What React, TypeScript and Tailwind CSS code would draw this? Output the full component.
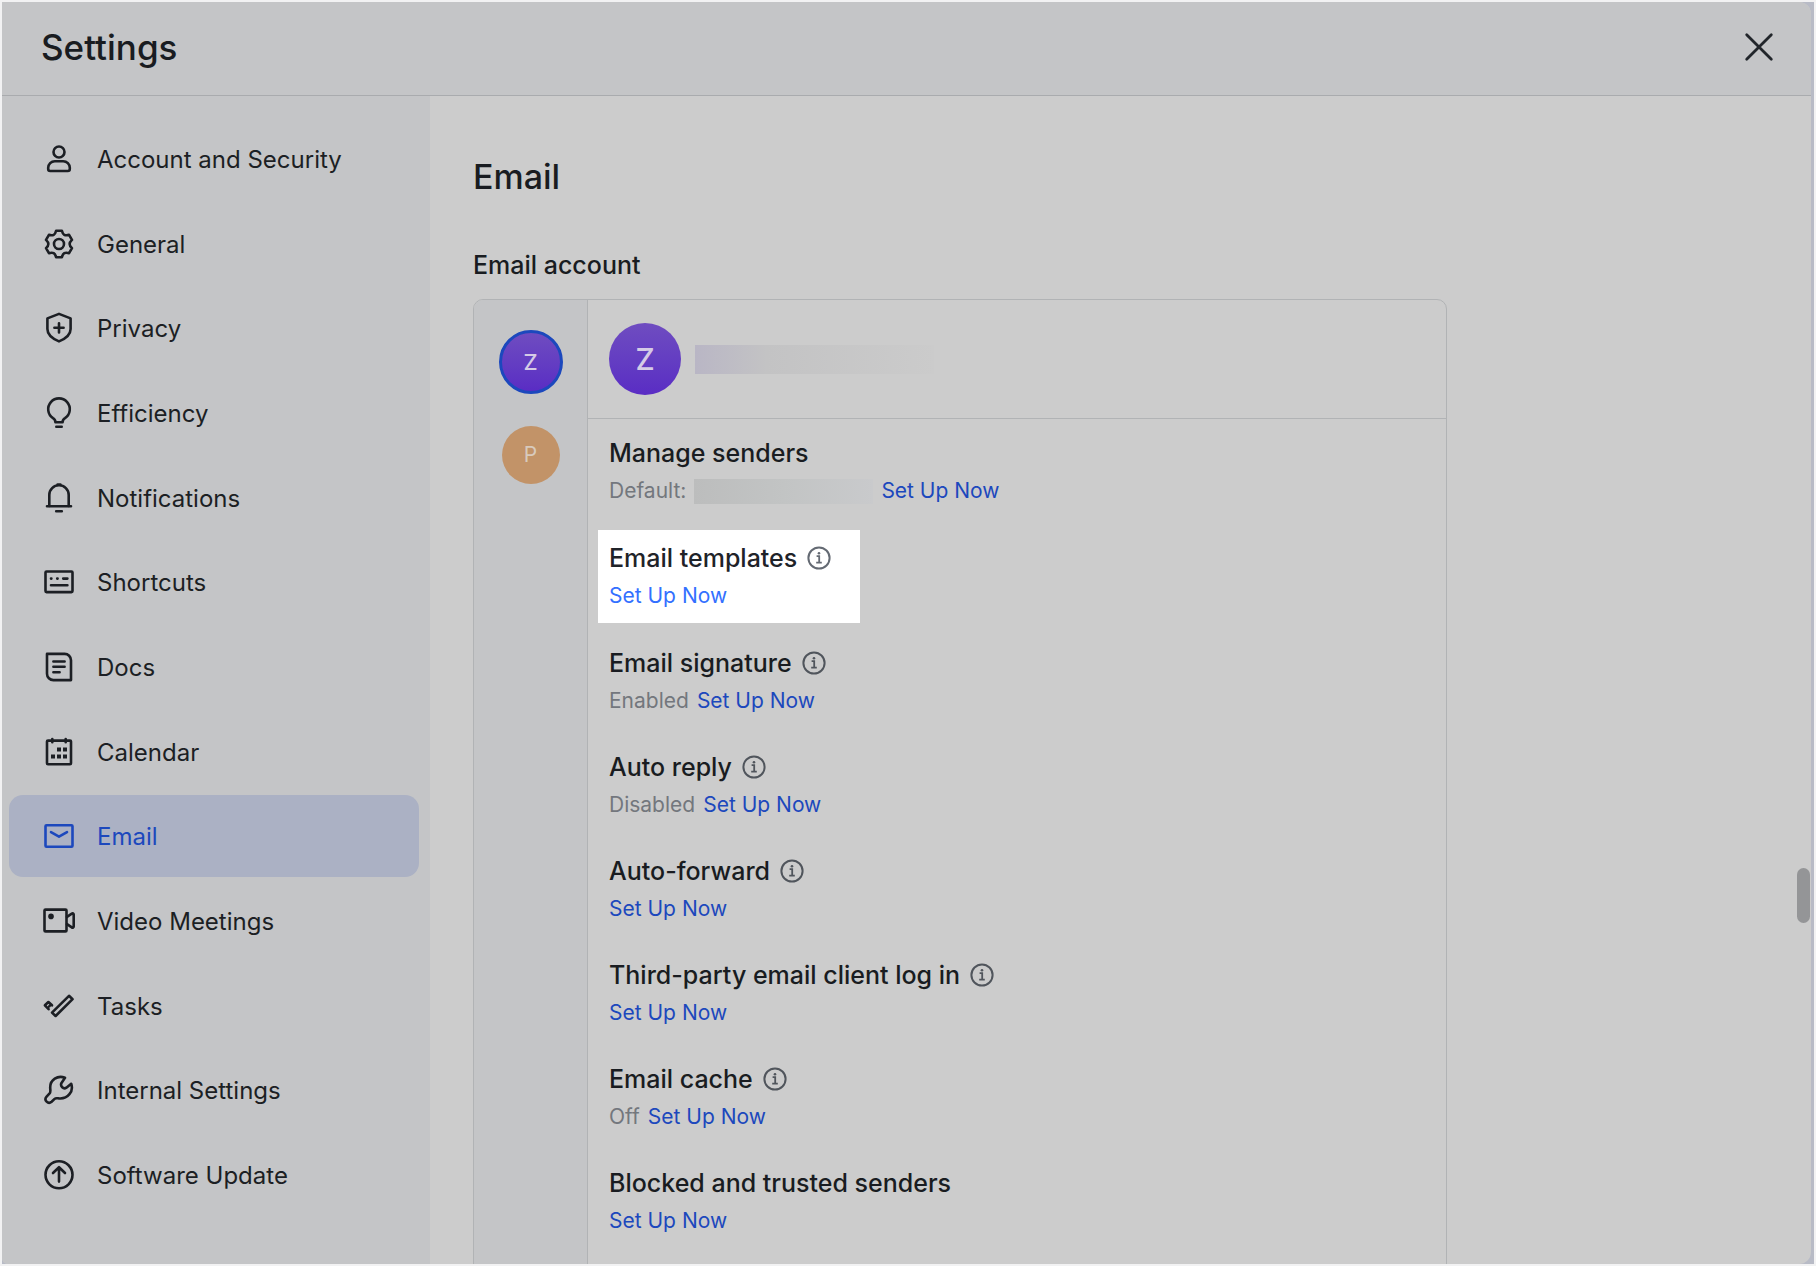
import type { ReactNode } from "react";

function Icon({ children }: { children: ReactNode }) {
  return (
    <svg
      viewBox="0 0 32 32"
      className="size-8 shrink-0"
      fill="none"
      stroke="currentColor"
      strokeWidth="2.6"
      strokeLinecap="round"
      strokeLinejoin="round"
      aria-hidden="true"
    >
      {children}
    </svg>
  );
}

/* Six-lobed gear outline: each lobe is the same pair of tips turned by 60 degrees. */
function gearPath() {
  const turn = (x: number, y: number, k: number) => {
    const a = (k * Math.PI) / 3;
    const px = 16 + x * Math.cos(a) - y * Math.sin(a);
    const py = 16 + x * Math.sin(a) + y * Math.cos(a);
    return `${px.toFixed(2)} ${py.toFixed(2)}`;
  };
  let d = "";
  for (let k = 0; k < 6; k++) {
    d += `${k === 0 ? "M" : "L"}${turn(-2.9, -13.3, k)}L${turn(2.9, -13.3, k)}`;
    d += `Q${turn(3.6, -10.2, k)} ${turn(5.3, -9.2, k)}`;
    d += `Q${turn(-3.6, -10.2, k + 1)} ${turn(-2.9, -13.3, k + 1)}`;
  }
  return d + "Z";
}

const navItems: { label: string; icon: ReactNode }[] = [
  {
    label: "Account and Security",
    icon: (
      <>
        <circle cx="16" cy="9" r="5.5" />
        <path d="M5.2 26v-1.200a6.600 6.600 0 0 1 6.600-6.600h8.400a6.600 6.600 0 0 1 6.600 6.600V26a2 2 0 0 1-2 2H7.200a2 2 0 0 1-2-2Z" />
      </>
    ),
  },
  {
    label: "General",
    icon: (
      <>
        <path d={gearPath()} />
        <circle cx="16" cy="16" r="5" />
      </>
    ),
  },
  {
    label: "Privacy",
    icon: (
      <>
        <path d="M16 1.9 27.6 6.4V17c0 5.5-4.3 9.4-11.6 12.4C8.700 26.400 4.400 22.500 4.400 17V6.400Z" />
        <path d="M16 11.200v9.200M11.400 15.800h9.200" />
      </>
    ),
  },
  {
    label: "Efficiency",
    icon: (
      <>
        <path d="M19.600 25.200h-7.200c0-2-.6-3-2.400-4A10.800 10.800 0 1 1 22 21.200c-1.800 1-2.400 2-2.400 4Z" />
        <path d="M13.300 29.700h5.400" />
      </>
    ),
  },
  {
    label: "Notifications",
    icon: (
      <>
        <path d="M6.300 24V13a9.700 9.700 0 0 1 19.400 0v11" />
        <path d="M4 24.300h24M13.200 29.300h5.600M14.600 2.600h2.800" />
      </>
    ),
  },
  {
    label: "Shortcuts",
    icon: (
      <>
        <rect x="2.500" y="5.500" width="27" height="20.600" rx="1" />
        <path d="M8 12.600h.4M14.200 12.600h.4M20.200 12.600h4.200M8 19.200h16.400" />
      </>
    ),
  },
  {
    label: "Docs",
    icon: (
      <>
        <path d="M4 2.900h17.600A6.400 6.400 0 0 1 28 9.300v19.800H10.400A6.400 6.400 0 0 1 4 22.700Z" />
        <path d="M10.400 10.500h11.200M10.400 15.800h11.200M10.400 21.200h6.200" />
      </>
    ),
  },
  {
    label: "Calendar",
    icon: (
      <>
        <rect x="4" y="4.600" width="24" height="23.600" rx="1" />
        <path d="M9.300 3v3.200M22.700 3v3.200" />
        <path
          d="M14 11.500h4v4h-4ZM20 11.500h4v4h-4ZM8 18.400h4v4H8ZM14 18.400h4v4h-4ZM20 18.400h4v4h-4Z"
          fill="currentColor"
          stroke="none"
        />
      </>
    ),
  },
  {
    label: "Email",
    icon: (
      <>
        <rect x="2.500" y="5.200" width="27" height="21.600" rx="1" />
        <path d="m8 12.200 8 4.400 8-4.400" />
      </>
    ),
  },
  {
    label: "Video Meetings",
    icon: (
      <>
        <rect x="1.500" y="4.600" width="22" height="21.800" rx="1" />
        <circle cx="8" cy="11.400" r="2.800" fill="currentColor" stroke="none" />
        <path d="m24 11.800 4.800-3.200a1.200 1.200 0 0 1 1.900 1v11.800a1.200 1.200 0 0 1-1.900 1l-4.800-3.200" />
      </>
    ),
  },
  {
    label: "Tasks",
    icon: (
      <>
        <path d="m26 5.800 3.600 3.400-17 16.800-3.600-3.400Z" />
        <path d="M9 15.300 5.400 12 1.900 15.300l3.700 3.900M6.200 16.400l.4-.4" />
      </>
    ),
  },
  {
    label: "Internal Settings",
    icon: (
      <path d="M22 3.800C14.500.800 7.200 6 7.200 13.200c0 3 .8 4.600-.6 6.200l-3 3.200c-3.200 3.600 1.600 8.200 5 5.200l3-2.900c1.400-1.300 3-.5 5-.4C24.600 24.900 31 17.500 28.200 9.800l-4.800 3.900c-3 1.900-6.500-1.500-4.900-4.800Z" />
    ),
  },
  {
    label: "Software Update",
    icon: (
      <>
        <circle cx="16" cy="15.800" r="13.500" />
        <path d="M16 22.600V8.600M10 14l6-5.800 6 5.800" />
      </>
    ),
  },
];

type Setting = { title: string; info?: boolean; status?: string; redacted?: boolean; highlight?: boolean };

const settings: Setting[] = [
  { title: "Manage senders", status: "Default:", redacted: true },
  { title: "Email templates", info: true, highlight: true },
  { title: "Email signature", info: true, status: "Enabled" },
  { title: "Auto reply", info: true, status: "Disabled" },
  { title: "Auto-forward", info: true },
  { title: "Third-party email client log in", info: true },
  { title: "Email cache", info: true, status: "Off" },
  { title: "Blocked and trusted senders" },
];

function InfoIcon() {
  return (
    <svg viewBox="0 0 24 24" className="size-6" fill="none" stroke="currentColor" strokeWidth="2" aria-hidden="true">
      <circle cx="12" cy="12" r="10.600" />
      <path d="M9.600 10.200h2.600v6.200M9.200 16.600h5.600" strokeWidth="1.800" />
      <circle cx="12" cy="7.200" r="1.300" fill="currentColor" stroke="none" />
    </svg>
  );
}

function SettingRow({ title, info, status, redacted, highlight }: Setting) {
  return (
    <li className={highlight ? "-mt-[7px] -mb-2 -ml-[11px] w-[262px] bg-white pt-2 pb-[9px] pl-[11px]" : ""}>
      <div className="flex items-center gap-2.5">
        <h3 className={`text-[25px] leading-10 font-medium ${highlight ? "text-[#1f2329]" : "text-[#191c21]"}`}>
          {title}
        </h3>
        {info && (
          <button
            type="button"
            aria-label={`About ${title}`}
            className={highlight ? "text-[#646a73]" : "text-[#50555c]"}
          >
            <InfoIcon />
          </button>
        )}
      </div>
      <div className="flex items-center gap-2 text-[21px] leading-9">
        {status && <span className="text-[#73777d]">{status}</span>}
        {redacted && (
          <span className="h-[25px] w-[179px] bg-linear-to-r from-[#bcbdbd] via-[#c2c4c4] to-[#c9cacc]" />
        )}
        <a href="#" className={highlight ? "text-[#3370ff]" : "text-[#1c48bd]"}>
          Set Up Now
        </a>
      </div>
    </li>
  );
}

export default function App() {
  return (
    <div className="h-screen bg-[#f2f2f3] p-0.5 font-['Inter',sans-serif] text-[#191c21]">
      <div className="h-full bg-[#b8bbc6] pr-[3px]">
        <div className="relative flex h-full flex-col overflow-hidden rounded-r-xl rounded-bl-md bg-[#cccccc]">
          <header className="flex h-[94px] shrink-0 items-center justify-between border-b border-[#a9abae] bg-[#c4c5c7] pr-9 pb-1 pl-[39px]">
            <h1 className="text-[35px] leading-10 font-medium">Settings</h1>
            <button type="button" aria-label="Close" className="text-[#22262b]">
              <Icon>
                <path d="M3.700 3.700 28.300 28.300M28.300 3.700 3.700 28.300" strokeWidth="2.800" />
              </Icon>
            </button>
          </header>

          <div className="flex min-h-0 flex-1">
            <nav className="flex w-[428px] shrink-0 flex-col bg-[#c4c5c7] pt-[22px] pr-[11px] pb-12 pl-[7px]">
              <ul className="flex flex-1 flex-col justify-between">
                {navItems.map(({ label, icon }) => (
                  <li key={label}>
                    <a
                      href="#"
                      aria-current={label === "Email" ? "page" : undefined}
                      className={`flex h-[82px] items-center gap-[22px] rounded-[14px] pl-[34px] text-[25px] ${
                        label === "Email" ? "bg-[#abb1c4] text-[#1c48bd]" : "text-[#1c1f24]"
                      }`}
                    >
                      <Icon>{icon}</Icon>
                      <span className="pt-0.5 text-2xl">{label}</span>
                    </a>
                  </li>
                ))}
              </ul>
            </nav>

            <main className="min-w-0 flex-1 overflow-hidden pt-[57px] pl-[43px]">
              <h2 className="text-[34px] leading-12 font-medium">Email</h2>
              <h3 className="mt-11 text-[25px] leading-10 font-medium">Email account</h3>
              <section className="mt-[14px] mr-[364px] flex min-h-[1020px] overflow-hidden rounded-[10px] border border-[#b1b3b5]">
                <div className="flex w-[114px] shrink-0 flex-col items-center gap-8 border-r border-[#b1b3b5] bg-[#c4c5c7] pt-[30px]">
                  <button
                    type="button"
                    className="flex size-16 items-center justify-center rounded-full border-3 border-[#1c48bd] bg-linear-to-b from-[#6f4cc0] to-[#5a2cc4] text-[22px] font-medium text-[#d5cbe6]"
                  >
                    Z
                  </button>
                  <button
                    type="button"
                    className="flex size-[58px] items-center justify-center rounded-full bg-[#c29368] text-[21px] text-[#d8cabd]"
                  >
                    P
                  </button>
                </div>
                <div className="min-w-0 flex-1">
                  <div className="flex h-[119px] items-center gap-[14px] border-b border-[#b1b3b5] pl-[21px]">
                    <span className="flex size-[72px] items-center justify-center rounded-full bg-linear-to-b from-[#6f4cc0] to-[#5a2cc4] text-[30px] font-medium text-[#d5cbe6]">
                      Z
                    </span>
                    <span className="h-[29px] w-[239px] bg-linear-to-r from-[#b9b6c5] via-[#c3c3c4] via-30% to-[#cbcbcb]" />
                  </div>
                  <ul className="flex flex-col gap-7 pt-[14px] pl-[21px]">
                    {settings.map((s) => (
                      <SettingRow key={s.title} {...s} />
                    ))}
                  </ul>
                </div>
              </section>
            </main>
          </div>

          <div className="absolute top-[866px] right-px h-[55px] w-[13px] rounded-full bg-[#949597]" />
        </div>
      </div>
    </div>
  );
}
